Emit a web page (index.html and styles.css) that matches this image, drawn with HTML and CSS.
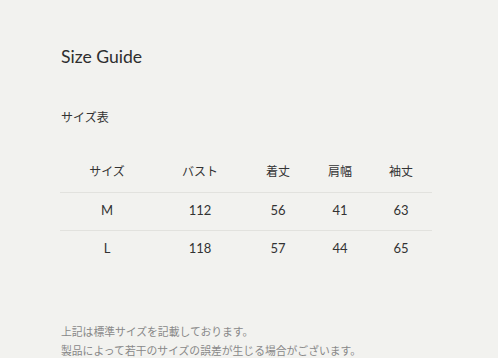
FILE: index.html
```html
<!DOCTYPE html>
<html lang="ja">
<head>
<meta charset="utf-8">
<link rel="stylesheet" href="styles.css">
</head>
<body>
<main class="page">
  <h1 class="title">Size Guide</h1>
  <h2 class="subtitle">サイズ表</h2>
  <table class="size-table">
    <colgroup>
      <col class="c1"><col class="c2"><col class="c3"><col class="c4"><col class="c5">
    </colgroup>
    <thead>
      <tr><th>サイズ</th><th>バスト</th><th>着丈</th><th>肩幅</th><th>袖丈</th></tr>
    </thead>
    <tbody>
      <tr><td>M</td><td>112</td><td>56</td><td>41</td><td>63</td></tr>
      <tr><td>L</td><td>118</td><td>57</td><td>44</td><td>65</td></tr>
    </tbody>
  </table>
  <p class="note">上記は標準サイズを記載しております。<br>製品によって若干のサイズの誤差が生じる場合がございます。</p>
</main>
</body>
</html>
```
FILE: styles.css
```css
html, body {
  margin: 0;
  padding: 0;
  background: #f2f2ef;
}
body {
  font-family: Lato, "Noto Sans CJK JP", sans-serif;
  color: #333;
}
.page {
  padding: 44px 0 0 61px;
}
.title {
  margin: 0;
  font-size: 17.6px;
  font-weight: 400;
  line-height: 26px;
  color: #2e2e2e;
}
.subtitle {
  margin: 39px 0 0;
  font-size: 12px;
  font-weight: 400;
  line-height: 18px;
  color: #333;
}
.size-table {
  margin: 23px 0 0 -1px;
  width: 372px;
  border-collapse: collapse;
  table-layout: fixed;
  font-size: 12px;
}
.c1 { width: 94px; }
.c2 { width: 92px; }
.c3 { width: 64px; }
.c4 { width: 60px; }
.c5 { width: 62px; }
.size-table th,
.size-table td {
  text-align: center;
  vertical-align: middle;
  font-weight: 400;
  padding: 0;
  color: #333;
}
.size-table th {
  height: 40px;
  padding-bottom: 2px;
}
.size-table td {
  height: 33px;
  padding-bottom: 4px;
  font-size: 13px;
}
.size-table thead tr,
.size-table tbody tr:first-child {
  border-bottom: 1px solid #e2e2de;
}
.note {
  margin: 54px 0 0;
  font-size: 10.8px;
  line-height: 19px;
  color: #888;
}
```
